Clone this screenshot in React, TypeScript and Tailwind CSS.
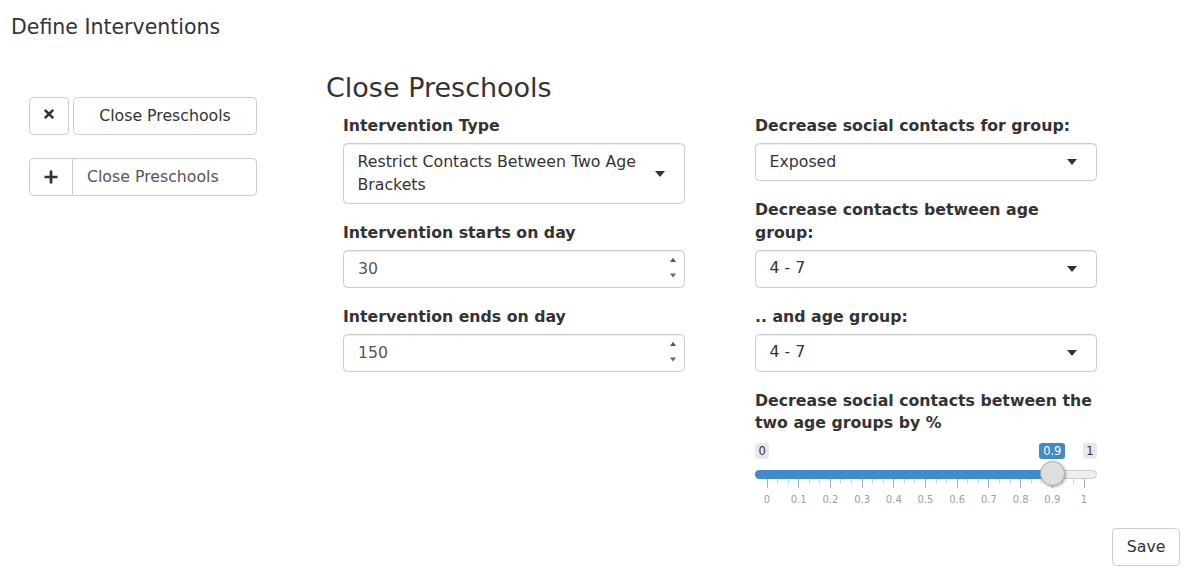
import React from "react";

const Caret = () => (
  <span className="block w-0 h-0 border-l-[5.5px] border-r-[5.5px] border-t-[6px] border-l-transparent border-r-transparent border-t-[#333]" />
);

function Label({ lines }: { lines: string[] }) {
  return (
    <div className="font-bold leading-[22.5px] mb-[5.5px] text-[#333]">
      {lines.map((l, i) => (
        <div key={i} className="whitespace-nowrap">
          {l}
        </div>
      ))}
    </div>
  );
}

function SelectBox({ lines, tall }: { lines: string[]; tall?: boolean }) {
  return (
    <div
      className={`${tall ? "h-[61px]" : "h-[38px]"} border border-[#ccc] rounded-[4.5px] bg-white flex items-center justify-between pl-[13.5px] pr-[19px] shadow-[inset_0_1px_1px_rgba(0,0,0,0.075)]`}
    >
      <div className="leading-[22.5px]">
        {lines.map((l, i) => (
          <div key={i} className="whitespace-nowrap">
            {l}
          </div>
        ))}
      </div>
      <Caret />
    </div>
  );
}

function NumberBox({ value }: { value: string }) {
  return (
    <div className="h-[38px] border border-[#ccc] rounded-[4.5px] bg-white flex items-stretch justify-between pl-[14px] pr-[8px] shadow-[inset_0_1px_1px_rgba(0,0,0,0.075)]">
      <div className="flex items-center text-[#555]">{value}</div>
      <svg width="6" height="36" viewBox="0 0 6 36">
        <polygon points="0,11 3,6.8 6,11" fill="#555" />
        <polygon points="0,22.5 6,22.5 3,26.5" fill="#666" />
      </svg>
    </div>
  );
}

function Field({ label, children }: { label: string[]; children: React.ReactNode }) {
  return (
    <div className="mb-[18px]">
      <Label lines={label} />
      {children}
    </div>
  );
}

function Slider() {
  const start = 12;
  const span = 317;
  const ticks = Array.from({ length: 31 }, (_, i) => i);
  const handleX = start + 0.9 * span;
  return (
    <div className="relative h-[66px] w-[342px]">
      <div className="absolute left-0 top-[3px] h-[16px] px-[3.5px] rounded-[3px] bg-[#e8e8e8] text-[11.5px] leading-[16px] text-[#333]">
        0
      </div>
      <div className="absolute right-0 top-[3px] h-[16px] px-[3.5px] rounded-[3px] bg-[#e8e8e8] text-[11.5px] leading-[16px] text-[#333]">
        1
      </div>
      <div
        className="absolute top-[3px] h-[16px] w-[26px] -ml-[13px] rounded-[3px] bg-[#428bca] text-[11.5px] leading-[16px] text-white text-center"
        style={{ left: handleX }}
      >
        0.9
      </div>
      <div className="absolute left-0 right-0 top-[30px] h-[9px] rounded-full bg-[#eee] border border-[#ccc]" />
      <div
        className="absolute left-0 top-[30px] h-[9px] rounded-l-full bg-[#428bca]"
        style={{ width: handleX }}
      />
      {ticks.map((i) => {
        const x = start + (i * span) / 30;
        const major = i % 3 === 0;
        return (
          <div
            key={i}
            className={`absolute top-[39px] w-px ${major ? "h-[9px] bg-[#8fb6e0]" : "h-[5px] bg-[#c4d6ea]"}`}
            style={{ left: x - 0.5 }}
          />
        );
      })}
      {ticks
        .filter((i) => i % 3 === 0)
        .map((i) => {
          const x = start + (i * span) / 30;
          const v = i / 30;
          const label = v === 0 ? "0" : v === 1 ? "1" : v.toFixed(1);
          return (
            <div
              key={"t" + i}
              className="absolute top-[53px] w-[30px] -ml-[15px] text-center text-[10px] leading-[14px] text-[#9a9ea6]"
              style={{ left: x }}
            >
              {label}
            </div>
          );
        })}
      <div
        className="absolute top-[21px] w-[25px] h-[25px] -ml-[12.5px] rounded-full bg-[#dedede] border border-[#aaa] shadow-[1px_1px_3px_rgba(0,0,0,0.3)]"
        style={{ left: handleX }}
      />
    </div>
  );
}

export default function App() {
  return (
    <div
      className="w-[1194px] h-[579px] bg-white text-[#333] text-[15.75px] overflow-hidden"
      style={{ fontFamily: "'DejaVu Sans', sans-serif" }}
    >
      <div className="pt-[16px] pl-[11px] text-[20.5px] leading-[22px]">Define Interventions</div>
      <div className="flex mt-[35px]">
        <div className="ml-[29px] w-[228px] mt-[24px] flex flex-col gap-[23px]">
          <div className="flex gap-[4px] h-[38px]">
            <div className="w-[40px] h-[38px] border border-[#ccc] rounded-[4.5px] bg-white flex items-center justify-center pb-[5px]">
              <svg width="12" height="12" viewBox="0 0 12 12">
                <path d="M1.8 1.8 L10.2 10.2 M10.2 1.8 L1.8 10.2" stroke="#333" strokeWidth="2.6" />
              </svg>
            </div>
            <div className="flex-1 h-[38px] border border-[#ccc] rounded-[4.5px] bg-white flex items-center justify-center">
              Close Preschools
            </div>
          </div>
          <div className="flex h-[38px]">
            <div className="w-[44px] h-[38px] border border-[#ccc] rounded-l-[4.5px] bg-white flex items-center justify-center">
              <svg width="14" height="14" viewBox="0 0 14 14">
                <path d="M7 0.5 L7 13.5 M0.5 7 L13.5 7" stroke="#333" strokeWidth="2.7" />
              </svg>
            </div>
            <div className="flex-1 h-[38px] border border-l-0 border-[#ccc] rounded-r-[4.5px] bg-white flex items-center pl-[14px] text-[#555]">
              Close Preschools
            </div>
          </div>
        </div>

        <div className="ml-[69px] flex flex-col">
          <div className="text-[27px] leading-[30px] h-[30px] mb-[12px] text-[#333]">Close Preschools</div>
          <div className="flex">
            <div className="ml-[17px] w-[342px]">
              <Field label={["Intervention Type"]}>
                <SelectBox tall lines={["Restrict Contacts Between Two Age", "Brackets"]} />
              </Field>
              <Field label={["Intervention starts on day"]}>
                <NumberBox value="30" />
              </Field>
              <Field label={["Intervention ends on day"]}>
                <NumberBox value="150" />
              </Field>
            </div>
            <div className="ml-[70px] w-[342px]">
              <Field label={["Decrease social contacts for group:"]}>
                <SelectBox lines={["Exposed"]} />
              </Field>
              <Field label={["Decrease contacts between age", "group:"]}>
                <SelectBox lines={["4 - 7"]} />
              </Field>
              <Field label={[".. and age group:"]}>
                <SelectBox lines={["4 - 7"]} />
              </Field>
              <div>
                <Label lines={["Decrease social contacts between the", "two age groups by %"]} />
                <Slider />
              </div>
            </div>
          </div>
        </div>
      </div>
      <div className="flex justify-end pr-[14px] mt-[22px]">
        <div className="h-[38px] px-[13.5px] border border-[#ccc] rounded-[4.5px] bg-white flex items-center">
          Save
        </div>
      </div>
    </div>
  );
}
